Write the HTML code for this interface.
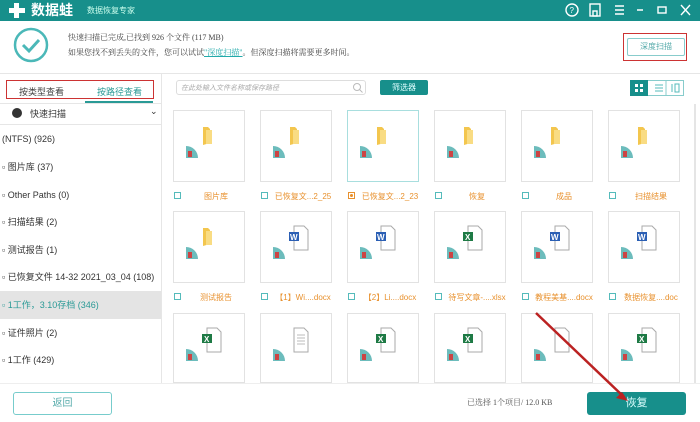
<!DOCTYPE html><html><head><meta charset="utf-8"><style>
*{margin:0;padding:0;box-sizing:border-box}
body{width:700px;height:422px;overflow:hidden;background:#fff;font-family:"Liberation Sans","Noto Sans CJK SC",sans-serif;font-size:9px;color:#333;position:relative}
.a{position:absolute}
.card{position:absolute;width:72px;height:72px;border:1px solid #e2e2e2;background:#fff}
.lbl{position:absolute;font-size:8px;color:#e8912e;white-space:nowrap}
.cb{position:absolute;width:7px;height:7px;border:1px solid #5bb;}
.tree{position:absolute;left:0;width:161px;height:28px;line-height:28px;font-size:9px;color:#333;padding-left:2px}
</style></head><body>
<div class="a" style="left:0;top:0;width:700px;height:21px;background:#178f8b"></div>
<svg class="a" style="left:8px;top:2px" width="18" height="17"><path d="M6 1h5v5h6v5h-6v5H6v-5H1V6h5z" fill="#fff"/></svg>
<div class="a" style="left:31px;top:2px;color:#fff;font-weight:bold;font-size:14px;line-height:17px">数据蛙</div>
<div class="a" style="left:87px;top:5px;color:#cfe;font-size:8px">数据恢复专家</div>
<svg class="a" style="left:565px;top:2px" width="130" height="17" stroke="#fff" fill="none" stroke-width="1.4">
<circle cx="7" cy="8" r="6"/><text x="4.5" y="11" font-size="8" fill="#fff" stroke="none" font-family="Liberation Sans">?</text>
<rect x="25" y="2" width="10" height="12"/><rect x="28" y="9" width="4" height="5"/>
<path d="M50 4h9M50 8h9M50 12h9M72 8h6"/><rect x="93" y="5" width="8" height="6"/><path d="M116 3l9 10M125 3l-9 10"/></svg>
<svg class="a" style="left:13px;top:27px" width="36" height="36"><circle cx="18" cy="18" r="16" fill="none" stroke="#4bb8b8" stroke-width="2.5"/><path d="M10 18l6 6 10-11" fill="none" stroke="#4bb8b8" stroke-width="3"/></svg>
<div class="a" style="left:68px;top:32px;font-size:8px;color:#444;font-family:'Liberation Serif','Noto Serif CJK SC',serif">快速扫描已完成,已找到 926 个文件 (117 MB)</div>
<div class="a" style="left:68px;top:47px;font-size:8px;color:#444;font-family:'Liberation Serif','Noto Serif CJK SC',serif">如果您找不到丢失的文件，您可以试试<span style="color:#2aa;text-decoration:underline">"深度扫描"</span>。但深度扫描将需要更多时间。</div>
<div class="a" style="left:623px;top:33px;width:64px;height:28px;border:1.5px solid #c33"></div>
<div class="a" style="left:627px;top:38px;width:58px;height:18px;border:1px solid #8cc;border-radius:2px;color:#5aa;font-size:8px;text-align:center;line-height:16px">深度扫描</div>
<div class="a" style="left:0;top:73px;width:700px;height:1px;background:#e6e6e6"></div>
<div class="a" style="left:161px;top:74px;width:1px;height:309px;background:#e6e6e6"></div>
<div class="a" style="left:6px;top:80px;width:148px;height:19px;border:1.5px solid #c33"></div>
<div class="a" style="left:19px;top:85px;font-size:9px;color:#444">按类型查看</div>
<div class="a" style="left:97px;top:85px;font-size:9px;color:#2a9a96">按路径查看</div>
<div class="a" style="left:85px;top:101px;width:68px;height:2px;background:#2a9a96"></div>
<div class="a" style="left:0;top:103px;width:161px;height:1px;background:#e6e6e6"></div>
<div class="a" style="left:12px;top:108px;width:10px;height:10px;border-radius:50%;background:#333"></div>
<div class="a" style="left:30px;top:107px;font-size:9px">快速扫描</div>
<div class="a" style="left:150px;top:106px;font-size:9px">⌄</div>
<div class="a" style="left:0;top:124px;width:161px;height:1px;background:#e6e6e6"></div>
<div class="tree" style="top:125px">(NTFS) (926)</div>
<div class="tree" style="top:153px">▫ 图片库 (37)</div>
<div class="tree" style="top:181px">▫ Other Paths (0)</div>
<div class="tree" style="top:208px">▫ 扫描结果 (2)</div>
<div class="tree" style="top:236px">▫ 测试报告 (1)</div>
<div class="tree" style="top:263px">▫ 已恢复文件 14-32 2021_03_04 (108)</div>
<div class="tree" style="top:291px;background:#e4e4e4;color:#2a9a96">▫ 1工作，3.10存档 (346)</div>
<div class="tree" style="top:319px">▫ 证件照片 (2)</div>
<div class="tree" style="top:346px">▫ 1工作 (429)</div>
<div class="a" style="left:176px;top:80px;width:190px;height:15px;border:1px solid #ddd;border-radius:3px;font-size:7px;color:#aaa;font-style:italic;padding:2px 4px">在此处输入文件名称或保存路径</div>
<svg class="a" style="left:352px;top:82px" width="11" height="11"><circle cx="5" cy="5" r="3.5" fill="none" stroke="#bbb"/><path d="M7.5 7.5l3 3" stroke="#bbb"/></svg>
<div class="a" style="left:380px;top:80px;width:48px;height:15px;background:#178f8b;border-radius:2px;color:#dff;font-size:8px;text-align:center;line-height:15px">筛选器</div>
<div class="a" style="left:630px;top:80px;width:54px;height:16px;border:1px solid #8cc"></div>
<div class="a" style="left:630px;top:80px;width:18px;height:16px;background:#178f8b"></div>
<svg class="a" style="left:630px;top:80px" width="54" height="16"><g fill="#fff"><rect x="5" y="4" width="3" height="3"/><rect x="10" y="4" width="3" height="3"/><rect x="5" y="9" width="3" height="3"/><rect x="10" y="9" width="3" height="3"/></g><path d="M25 5h8M25 8h8M25 11h8M42 4v8M45 4h4v8h-4z" stroke="#5bb" fill="none"/><path d="M36 0v16" stroke="#8cc"/></svg>
<div class="a" style="left:0;top:383px;width:700px;height:1px;background:#eee"></div>
<div class="a" style="left:13px;top:392px;width:99px;height:23px;border:1px solid #7cc;border-radius:3px;color:#5aa;text-align:center;line-height:21px;font-size:10px">返回</div>
<div class="a" style="left:467px;top:397px;font-size:8px;color:#555;font-family:'Liberation Serif','Noto Serif CJK SC',serif">已选择 1个项目/ 12.0 KB</div>
<div class="a" style="left:587px;top:392px;width:99px;height:23px;background:#178f8b;border-radius:3px;color:#dff;text-align:center;line-height:23px;font-size:11px">恢复</div>
<div class="a" style="left:694px;top:104px;width:2px;height:279px;background:#e5e5e5"></div>
<div id="g"></div>
<script>
var xs=[173,260,347,434,521,608],ys=[110,211,313];
var L=[["图片库","已恢复文...2_25","已恢复文...2_23","恢复","成品","扫描结果"],["测试报告","【1】Wi....docx","【2】Li....docx","待写文章-....xlsx","教程美基....docx","数据恢复....doc"]];
var I=[["f","f","f","f","f","f"],["f","w","w","x","w","w"],["x","t","x","x","b","x"]];
var h="";
for(var r=0;r<3;r++)for(var c=0;c<6;c++){var x=xs[c],y=ys[r],t=I[r][c];
var ht=r==2?70:72;
h+='<div class="card" style="left:'+x+'px;top:'+y+'px;height:'+ht+'px;'+(r==0&&c==2?'border-color:#a8dede':'')+'"><svg width="70" height="70" style="position:absolute;left:0;top:0">';
if(t=="f")h+='<path d="M29 16h5l2 2v14l-7 2z" fill="#f3c64e"/><path d="M32 19h6v14h-6z" fill="#f9dc83"/>';
else{h+='<path d="M33 14h10l4 4v20h-14z" fill="#fff" stroke="#aaa"/>';
if(t=="w")h+='<rect x="28" y="20" width="10" height="9" fill="#2b5fb4"/><text x="29" y="28" font-size="8" fill="#fff" font-family="Liberation Sans" font-weight="bold">W</text>';
if(t=="x")h+='<rect x="28" y="20" width="10" height="9" fill="#1e7a45"/><text x="30" y="28" font-size="8" fill="#fff" font-family="Liberation Sans" font-weight="bold">X</text>';
if(t=="t")h+='<path d="M36 21h8M36 24h8M36 27h8M36 30h8" stroke="#bbb"/>';}
h+='<path d="M12 35a12 12 0 0 1 12 12h-12z" fill="#6cbcbc"/><rect x="14" y="40" width="4" height="6" fill="#c44"/></svg></div>';
if(r<2){var ly=r==0?191:292;h+='<div class="cb" style="left:'+(x+1)+'px;top:'+(ly+1)+'px;'+(r==0&&c==2?'border-color:#e8912e;background:radial-gradient(#e8912e 40%,#fff 45%)':'')+'"></div><div class="lbl" style="left:'+(x+14)+'px;top:'+ly+'px;width:58px;text-align:center">'+L[r][c]+'</div>';}}
document.getElementById("g").innerHTML=h;
</script>
<svg class="a" style="left:0;top:0" width="700" height="422"><path d="M536 313L624 397" stroke="#b22" stroke-width="2.5"/><path d="M628 401l-12-3 6-6z" fill="#b22"/></svg>
</body></html>
